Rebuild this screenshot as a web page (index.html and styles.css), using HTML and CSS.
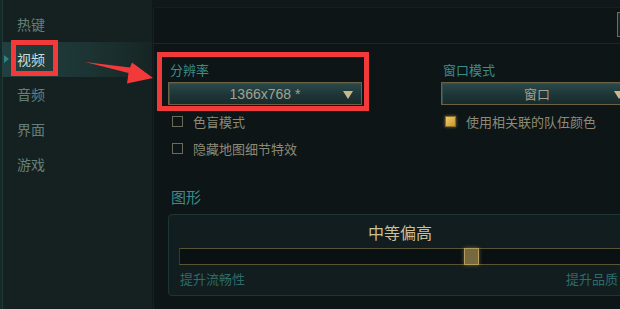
FILE: index.html
```html
<!DOCTYPE html>
<html lang="zh">
<head>
<meta charset="utf-8">
<title>视频设置</title>
<link rel="stylesheet" href="styles.css">
</head>
<body>
<div class="app">
  <aside class="sidebar">
    <div class="nav-item">热键</div>
    <div class="nav-item active">视频</div>
    <div class="nav-item">音频</div>
    <div class="nav-item">界面</div>
    <div class="nav-item">游戏</div>
  </aside>
  <main class="panel">
    <div class="topbar"><button class="top-btn"></button></div>
    <div class="content">
      <div class="columns">
        <div class="col">
          <div class="field-label">分辨率</div>
          <div class="select"><span class="select-text">1366x768 *</span><span class="caret"></span></div>
          <div class="checks">
            <div class="check"><span class="box"></span><span class="check-text">色盲模式</span></div>
            <div class="check"><span class="box"></span><span class="check-text">隐藏地图细节特效</span></div>
          </div>
        </div>
        <div class="col col-right">
          <div class="field-label">窗口模式</div>
          <div class="select"><span class="select-text">窗口</span><span class="caret"></span></div>
          <div class="checks">
            <div class="check"><span class="box checked"></span><span class="check-text">使用相关联的队伍颜色</span></div>
          </div>
        </div>
      </div>
      <h2 class="section-title">图形</h2>
      <div class="gfx">
        <div class="gfx-title">中等偏高</div>
        <div class="track"><span class="thumb" style="left:64.5%"></span></div>
        <div class="gfx-labels"><span>提升流畅性</span><span>提升品质</span></div>
      </div>
    </div>
  </main>
  <div class="mark mark-nav"></div>
  <div class="mark mark-res"></div>
  <svg class="arrow" width="80" height="40" viewBox="80 52 80 40" xmlns="http://www.w3.org/2000/svg">
    <polygon points="85,62 130,67.5 132,62.5 153,78 127,83.5 128.5,73" fill="#f23a3a"/>
  </svg>
</div>
</body>
</html>
```
FILE: styles.css
```css
* { box-sizing: border-box; }
html, body { margin: 0; padding: 0; }
body {
  width: 620px;
  height: 309px;
  overflow: hidden;
  background: #111a1b;
  font-family: "Noto Sans CJK SC", "Noto Sans", sans-serif;
}
.app {
  position: relative;
  width: 700px;
  height: 309px;
  display: flex;
  background: #101819;
}
.sidebar {
  width: 152px;
  flex: none;
  background: #152120;
  border-left: 2px solid #132a28;
  box-shadow: inset 1px 0 0 #1f3836;
  padding-top: 7px;
  display: flex;
  flex-direction: column;
}
.nav-item {
  height: 35px;
  line-height: 35px;
  padding-left: 15px;
  font-size: 14px;
  color: #637f7b;
  position: relative;
}
.nav-item.active {
  color: #cfdcda;
  background: linear-gradient(90deg, #21403f 0%, #1c3534 55%, #162524 100%);
}
.nav-item.active::before {
  content: "";
  position: absolute;
  left: 2px;
  top: 13px;
  border-left: 5px solid #2b8585;
  border-top: 4px solid transparent;
  border-bottom: 4px solid transparent;
}
.panel {
  flex: 1;
  margin-top: 7px;
  margin-left: 1px;
  background: #0d1517;
  border-top-left-radius: 4px;
  box-shadow: inset 1px 0 0 #142222, inset 0 1px 0 #132020;
  display: flex;
  flex-direction: column;
}
.topbar {
  height: 37px;
  border-bottom: 1px solid #1a2828;
  display: flex;
  justify-content: flex-end;
  align-items: flex-start;
  padding-top: 5px;
  padding-right: 13px;
}
.top-btn {
  width: 70px;
  height: 25px;
  border: 1px solid #7b6c45;
  background: linear-gradient(#1e2c2c, #151f20);
  padding: 0;
}
.content {
  padding: 18px 0 0 15px;
}
.columns {
  display: flex;
  gap: 79px;
}
.col { width: 194px; }
.col-right { width: 192px; }
.field-label {
  font-size: 13px;
  line-height: 16px;
  height: 16px;
  color: #3b8c8a;
  padding-left: 2px;
  margin-bottom: 4px;
}
.select {
  height: 23px;
  border: 1px solid #6b6246;
  background: linear-gradient(#2a4a4a, #1d3436 60%, #182b2d);
  box-shadow: inset 1px 1px 0 #35524f;
  display: flex;
  align-items: center;
  justify-content: center;
  position: relative;
}
.select-text {
  font-family: "Liberation Sans", "Noto Sans CJK SC", sans-serif;
  font-size: 14px;
  color: #a3a192;
}
.col-right .select-text {
  font-family: "Noto Sans CJK SC", sans-serif;
  font-size: 13px;
}
.caret {
  position: absolute;
  right: 8px;
  top: 8px;
  border-top: 8px solid #c9b88a;
  border-left: 5px solid transparent;
  border-right: 5px solid transparent;
}
.checks {
  margin-top: 7px;
  display: flex;
  flex-direction: column;
  gap: 9px;
}
.check {
  height: 18px;
  display: flex;
  align-items: center;
  gap: 10px;
  padding-left: 4px;
}
.box {
  width: 11px;
  height: 11px;
  border: 1px solid #6b6a5c;
  flex: none;
}
.box.checked {
  border-color: #8a6a2a;
  background: linear-gradient(135deg, #f2cd68, #c8952e);
  box-shadow: 0 0 3px rgba(230, 180, 80, 0.5);
}
.check-text {
  font-size: 13px;
  color: #8c8a76;
}
.section-title {
  margin: 30px 0 7px;
  font-size: 15px;
  font-weight: normal;
  line-height: 20px;
  color: #3e8a88;
  padding-left: 3px;
}
.gfx {
  width: 464px;
  height: 82px;
  border: 1px solid #1c3636;
  border-radius: 4px;
  background: #111d1e;
  padding: 7px 10px 0;
}
.gfx-title {
  text-align: center;
  font-size: 16px;
  line-height: 20px;
  color: #cdbf96;
}
.track {
  margin-top: 6px;
  height: 17px;
  border: 1px solid #5b5337;
  border-left-color: #3b3826;
  background: #0a1112;
  position: relative;
}
.thumb {
  position: absolute;
  top: -1px;
  width: 15px;
  height: 17px;
  background: #77693f;
  border: 1px solid #b29d5e;
  box-shadow: 0 0 4px rgba(200, 170, 90, 0.5);
}
.gfx-labels {
  margin-top: 6px;
  display: flex;
  justify-content: space-between;
  font-size: 13px;
  line-height: 16px;
  color: #2e6b69;
  padding: 0 3px 0 1px;
}
.mark {
  position: absolute;
  border: 5px solid #f23a3a;
}
.mark-nav {
  left: 11px;
  top: 40px;
  width: 47px;
  height: 36px;
}
.mark-res {
  left: 157px;
  top: 52px;
  width: 212px;
  height: 59px;
}
.arrow {
  position: absolute;
  left: 80px;
  top: 52px;
}
```
